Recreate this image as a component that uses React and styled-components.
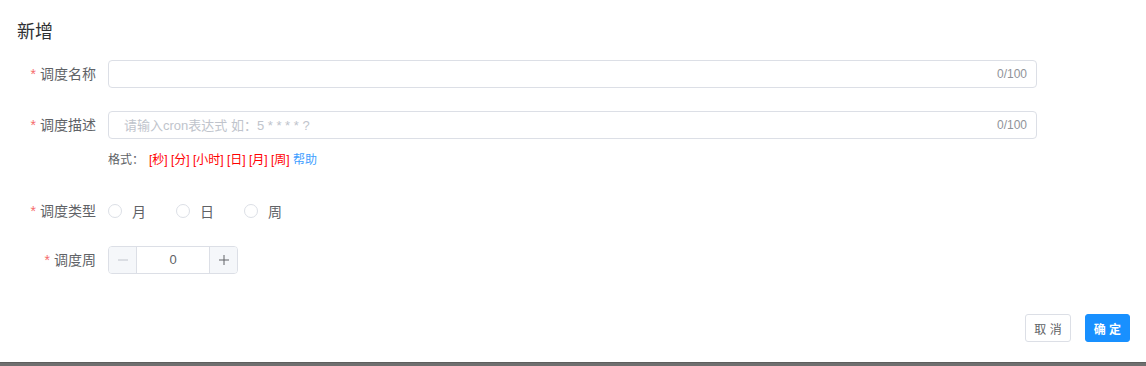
import React from "react";
import styled, { createGlobalStyle } from "styled-components";

const GlobalStyle = createGlobalStyle`
  html, body {
    margin: 0;
    padding: 0;
    background: #ffffff;
  }

  body {
    font-family: "Liberation Sans", "Noto Sans CJK SC", sans-serif;
    color: #606266;
  }

  * {
    box-sizing: border-box;
  }
`;

const Page = styled.div`
  width: 1146px;
  height: 366px;
  display: flex;
  flex-direction: column;
  overflow: hidden;
`;

const Dialog = styled.div`
  height: 362px;
  background: #ffffff;
  display: flex;
  flex-direction: column;
`;

const Backdrop = styled.div`
  flex: 1;
  background: #6f6f6f;
  border-top: 1px solid #5e5e5e;
`;

const Header = styled.div`
  padding: 20px 17px 0;
`;

const Title = styled.span`
  font-size: 18px;
  line-height: 24px;
  color: #303133;
`;

const Form = styled.div`
  margin-top: 16px;
  display: flex;
  flex-direction: column;
`;

const FormItem = styled.div`
  display: flex;
  align-items: flex-start;
  margin-bottom: ${(p) => p.$mb || 0}px;
`;

const Label = styled.label`
  width: 108px;
  flex-shrink: 0;
  padding-right: 12px;
  text-align: right;
  font-size: 14px;
  line-height: 28px;
  color: #606266;

  &::before {
    content: "*";
    color: #f56c6c;
    margin-right: 4px;
  }
`;

const Content = styled.div`
  display: flex;
  flex-direction: column;
`;

const InputWrap = styled.div`
  position: relative;
  width: 929px;
  height: 28px;
`;

const Input = styled.input`
  width: 100%;
  height: 28px;
  border: 1px solid #dcdfe6;
  border-radius: 4px;
  padding: 0 50px 0 15px;
  font-family: inherit;
  font-size: 13px;
  color: #606266;
  outline: none;

  &::placeholder {
    color: #c0c4cc;
  }
`;

const Count = styled.span`
  position: absolute;
  right: 10px;
  top: 0;
  line-height: 28px;
  font-size: 12px;
  color: #909399;
`;

const Hint = styled.div`
  margin-top: 12px;
  font-size: 12px;
  line-height: 18px;
  color: #606266;
`;

const HintRed = styled.span`
  color: #ff0000;
  margin-left: 5px;
`;

const HintLink = styled.a`
  color: #409eff;
  text-decoration: none;
`;

const RadioGroup = styled.div`
  display: flex;
  align-items: center;
  height: 28px;
`;

const Radio = styled.label`
  display: flex;
  align-items: center;
  margin-right: 30px;
  font-size: 14px;
  color: #606266;
`;

const RadioDot = styled.span`
  width: 14px;
  height: 14px;
  border: 1px solid #dcdfe6;
  border-radius: 50%;
  background: #ffffff;
  margin-right: 10px;
`;

const NumberBox = styled.div`
  display: flex;
  width: 130px;
  height: 28px;
  border: 1px solid #dcdfe6;
  border-radius: 4px;
  overflow: hidden;
`;

const StepBtn = styled.span`
  width: 28px;
  flex-shrink: 0;
  display: flex;
  align-items: center;
  justify-content: center;
  background: #f5f7fa;
  color: ${(p) => (p.$disabled ? "#c0c4cc" : "#606266")};
  border-${(p) => p.$side}: 1px solid #dcdfe6;
`;

const NumberValue = styled.span`
  flex: 1;
  text-align: center;
  font-size: 13px;
  line-height: 26px;
  color: #606266;
`;

const Footer = styled.div`
  margin-top: auto;
  padding: 0 16px 20px;
  display: flex;
  justify-content: flex-end;
  gap: 14px;
`;

const Button = styled.button`
  height: 28px;
  padding: 0 8px;
  border-radius: 3px;
  font-family: inherit;
  font-size: 12px;
  border: 1px solid ${(p) => (p.$primary ? "#1890ff" : "#dcdfe6")};
  background: ${(p) => (p.$primary ? "#1890ff" : "#ffffff")};
  color: ${(p) => (p.$primary ? "#ffffff" : "#606266")};
  font-weight: ${(p) => (p.$primary ? 700 : 400)};
`;

const Minus = () => (
  <svg width="10" height="10" viewBox="0 0 10 10">
    <path d="M0 5h10" stroke="currentColor" strokeWidth="1" />
  </svg>
);

const Plus = () => (
  <svg width="10" height="10" viewBox="0 0 10 10">
    <path d="M0 5h10M5 0v10" stroke="currentColor" strokeWidth="1" />
  </svg>
);

const radios = ["月", "日", "周"];

export default function App() {
  return (
    <>
      <GlobalStyle />
      <Page>
        <Dialog>
          <Header>
            <Title>新增</Title>
          </Header>

          <Form>
            <FormItem $mb={23}>
              <Label>调度名称</Label>
              <InputWrap>
                <Input />
                <Count>0/100</Count>
              </InputWrap>
            </FormItem>

            <FormItem $mb={28}>
              <Label>调度描述</Label>
              <Content>
                <InputWrap>
                  <Input placeholder="请输入cron表达式 如：5 * * * * ?" />
                  <Count>0/100</Count>
                </InputWrap>
                <Hint>
                  格式：
                  <HintRed>[秒] [分] [小时] [日] [月] [周]</HintRed>{" "}
                  <HintLink href="#">帮助</HintLink>
                </Hint>
              </Content>
            </FormItem>

            <FormItem $mb={21}>
              <Label>调度类型</Label>
              <RadioGroup>
                {radios.map((r) => (
                  <Radio key={r}>
                    <RadioDot />
                    {r}
                  </Radio>
                ))}
              </RadioGroup>
            </FormItem>

            <FormItem>
              <Label>调度周</Label>
              <NumberBox>
                <StepBtn $side="right" $disabled>
                  <Minus />
                </StepBtn>
                <NumberValue>0</NumberValue>
                <StepBtn $side="left">
                  <Plus />
                </StepBtn>
              </NumberBox>
            </FormItem>
          </Form>

          <Footer>
            <Button>取 消</Button>
            <Button $primary>确 定</Button>
          </Footer>
        </Dialog>
        <Backdrop />
      </Page>
    </>
  );
}
